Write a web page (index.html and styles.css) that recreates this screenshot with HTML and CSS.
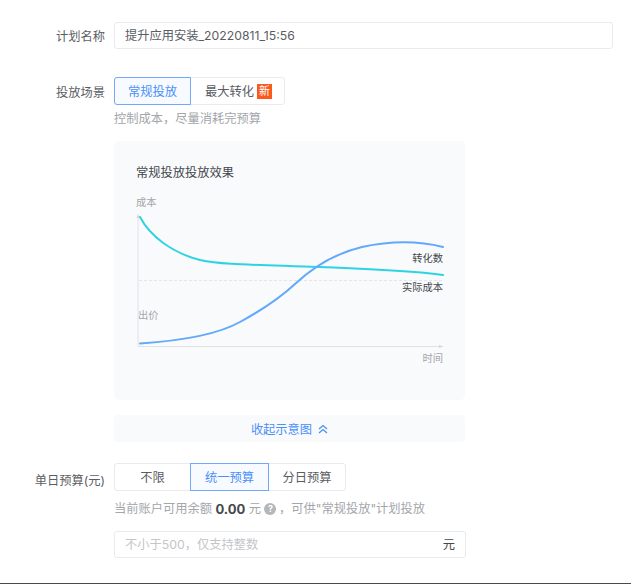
FILE: index.html
```html
<!DOCTYPE html>
<html lang="zh-CN">
<head>
<meta charset="utf-8">
<title>计划设置</title>
<link rel="stylesheet" href="styles.css">
</head>
<body>
<main class="form">
  <div class="row row-name">
    <label class="label">计划名称</label>
    <div class="control wide"><div class="input">提升应用安装_20220811_15:56</div></div>
  </div>
  <div class="row row-scene">
    <label class="label">投放场景</label>
    <div class="control">
      <div class="seg">
        <span class="seg-item seg-active s1">常规投放</span>
        <span class="seg-item s2">最大转化<i class="new">新</i></span>
      </div>
      <p class="hint hint-scene">控制成本，尽量消耗完预算</p>
      <div class="card">
        <svg class="chart" viewBox="114 141 351 259" width="351" height="259" aria-label="常规投放投放效果">
          <text class="c-title" x="136" y="177">常规投放投放效果</text>
          <text class="c-muted" x="136" y="206">成本</text>
          <path class="axis" d="M138 217V346.500H441"/>
          <path class="arrow" d="M136.500 218L138 213.500L139.500 218ZM439 345L443.500 346.500L439 348Z"/>
          <path class="dash" d="M139 280.500H443"/>
          <path class="line teal" d="M140 217C150 236 172 253 200 260C218 264 240 264.500 290 266C330 267.500 400 269 443 275"/>
          <path class="line blue" d="M140 343.500C170 341.500 215 336 240 322C262 310 280 298 295 284C310 270 332 254 362 247C390 241 415 240 443 247"/>
          <text class="c-dark" x="443" y="262" text-anchor="end">转化数</text>
          <text class="c-dark" x="443" y="291" text-anchor="end">实际成本</text>
          <text class="c-muted" x="138" y="319">出价</text>
          <text class="c-muted" x="443" y="362" text-anchor="end">时间</text>
        </svg>
      </div>
      <div class="collapse">收起示意图
        <svg class="chev" viewBox="0 0 10 10" width="10" height="10"><path d="M1 5L5 1.500L9 5M1 9L5 5.500L9 9"/></svg>
      </div>
    </div>
  </div>
  <div class="row row-budget">
    <label class="label label-budget">单日预算(元)</label>
    <div class="control">
      <div class="seg">
        <span class="seg-item b1">不限</span>
        <span class="seg-item seg-active b2">统一预算</span>
        <span class="seg-item b3">分日预算</span>
      </div>
      <p class="hint hint-budget">当前账户可用余额 <b class="amount">0.00</b> 元 <i class="help">?</i> ，可供"常规投放"计划投放</p>
      <div class="input input-unit"><span class="placeholder">不小于500，仅支持整数</span><span class="unit">元</span></div>
    </div>
  </div>
</main>
<div class="rule"></div>
</body>
</html>
```
FILE: styles.css
```css
* { box-sizing: border-box; }
html, body { margin: 0; padding: 0; height: 584px; overflow: hidden; background: #fff; }
body {
  position: relative;
  font-family: "Inter", "Noto Sans CJK SC", sans-serif;
  font-size: 12.250px;
  color: #4a4d52;
}
.form { padding: 22px 18px 0 0; }
.row { display: flex; align-items: flex-start; }
.label { width: 105px; margin-right: 9px; flex: none; text-align: right; line-height: 27px; padding-top: 1px; color: #5a5d63; }
.row-scene .label { padding-top: 2px; }
.label-budget { padding-top: 4px; }
.control { width: 352px; flex: none; }
.control.wide { width: 499px; }
.row-scene { margin-top: 27px; }
.row-budget { margin-top: 21px; }
.input {
  height: 27px; padding: 0 10px; line-height: 25px;
  border: 1px solid #e8eaee; border-radius: 3px; color: #5a5d63;
}
.seg { display: flex; height: 28px; }
.seg-item {
  display: flex; align-items: center; justify-content: center;
  border: 1px solid #e8eaee; margin-left: -1px; background: #fff; color: #5a5d63;
}
.seg-item:first-child { margin-left: 0; border-radius: 3px 0 0 3px; }
.seg-item:last-child { border-radius: 0 3px 3px 0; }
.seg-active { position: relative; border-color: #70a9f8; background: #f7faff; color: #4a90f7; }
.s1 { width: 77px; }
.s2 { width: 95px; padding-left: 2px; }
.b1 { width: 77px; }
.b2 { width: 79px; }
.b3 { width: 78px; }
.new {
  display: block; width: 15px; height: 15px; margin-left: 3px;
  background: #fb5a1e; color: #fff; font-style: normal; font-size: 11px; line-height: 15px; text-align: center;
}
.hint { margin: 0; color: #a3a6ab; line-height: 18px; }
.hint-scene { margin-top: 5px; }
.card {
  margin-top: 13px; height: 259px; width: 351px;
  background: #f9fafc; border-radius: 5px;
}
.chart { display: block; }
.c-title { font-size: 12.250px; fill: #44474c; }
.c-muted { font-size: 10.250px; fill: #a3a6ab; }
.c-dark { font-size: 10.250px; fill: #44474c; }
.axis { fill: none; stroke: #e0e2e6; stroke-width: 1; }
.arrow { fill: #d5d7db; }
.dash { fill: none; stroke: #e3e5e8; stroke-dasharray: 3 2; }
.line { fill: none; stroke-width: 2; stroke-linecap: round; }
.teal { stroke: #2ed3e3; }
.blue { stroke: #62a8fb; }
.collapse {
  margin-top: 15px; height: 27px; width: 351px;
  display: flex; align-items: center; justify-content: center; gap: 6px;
  background: #f9fafc; border-radius: 4px; color: #4a90f7;
}
.chev { fill: none; stroke: #4a90f7; stroke-width: 1.300; }
.hint-budget { margin-top: 9px; display: flex; align-items: center; white-space: pre; }
.amount { color: #44474c; font-size: 13px; }
.help {
  display: block; width: 12px; height: 12px; margin-right: -1px; border-radius: 50%;
  background: #b4b6ba; color: #fff; font-style: normal; font-size: 9px; line-height: 12px; text-align: center; font-weight: 700;
}
.input-unit { width: 352px; margin-top: 13px; display: flex; justify-content: space-between; }
.placeholder { color: #c3c5c9; }
.unit { color: #44474c; }
.rule { position: absolute; left: 0; right: 0; bottom: 0; height: 1px; background: #4a4a4c; }
```
